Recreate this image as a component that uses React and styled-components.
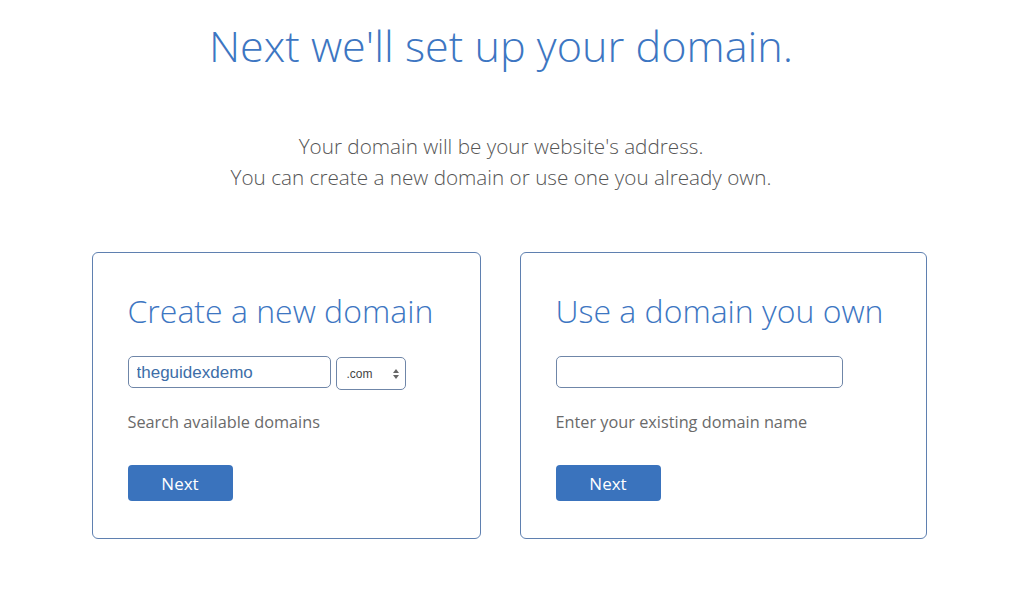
import styled, { createGlobalStyle } from 'styled-components';

const GlobalStyle = createGlobalStyle`
  html, body {
    margin: 0;
    padding: 0;
    background: #fff;
  }
  body {
    font-family: 'Open Sans', 'Liberation Sans', sans-serif;
  }
`;

const Page = styled.div`
  width: 1024px;
  height: 590px;
  overflow: hidden;
  background: #fff;
  display: flex;
  flex-direction: column;
  align-items: center;
`;

const Title = styled.h1`
  margin: 15px 22px 0 0;
  font-size: 43.2px;
  font-weight: 300;
  color: #3d76c2;
  line-height: 62px;
`;

const Intro = styled.p`
  margin: 54px 22px 0 0;
  font-size: 20.7px;
  font-weight: 300;
  color: #555;
  line-height: 31px;
  text-align: center;
`;

const Cards = styled.div`
  display: flex;
  gap: 39px;
  margin-top: 59px;
  margin-right: 6px;
`;

const Card = styled.section`
  box-sizing: border-box;
  width: ${({ $width }) => $width}px;
  height: 287px;
  border: 1.5px solid #5f80b0;
  border-radius: 6px;
  padding: 36px 35px 0;
`;

const CardTitle = styled.h2`
  margin: 0;
  font-size: 32px;
  font-weight: 300;
  color: #3d76c2;
  line-height: 44px;
`;

const Row = styled.div`
  display: flex;
  gap: 5px;
  height: 34px;
  margin-top: 23px;
`;

const TextInput = styled.input`
  box-sizing: border-box;
  width: ${({ $width }) => $width}px;
  height: 32px;
  border: 1px solid #6f86a8;
  border-radius: 5px;
  padding: 2px 8px 0;
  font-family: 'Liberation Sans', Arial, sans-serif;
  font-size: 17px;
  color: #3d6ea8;
  outline: none;
  background: #fff;
`;

const SelectBox = styled.div`
  box-sizing: border-box;
  width: 70px;
  height: 33px;
  margin-top: 1px;
  border: 1px solid #6f86a8;
  border-radius: 5px;
  display: flex;
  align-items: center;
  justify-content: space-between;
  padding: 0 6px 0 10px;
  font-family: 'Liberation Sans', Arial, sans-serif;
  font-size: 12px;
  color: #444;
`;

const Hint = styled.p`
  margin: 20px 0 0;
  font-size: 16.3px;
  color: #6a6a6a;
  line-height: 24px;
`;

const Button = styled.button`
  margin-top: 31px;
  width: 105px;
  height: 36px;
  border: none;
  border-radius: 4px;
  background: #3a73bd;
  color: #fff;
  font-family: 'Open Sans', 'Liberation Sans', sans-serif;
  font-size: 17px;
  cursor: pointer;
`;

function Arrows() {
  return (
    <svg width="6" height="10" viewBox="0 0 6 10">
      <path d="M0 4 L3 0 L6 4 Z" fill="#666" />
      <path d="M0 6 L3 10 L6 6 Z" fill="#666" />
    </svg>
  );
}

export default function App() {
  return (
    <Page>
      <GlobalStyle />
      <Title>Next we'll set up your domain.</Title>
      <Intro>
        Your domain will be your website's address.
        <br />
        You can create a new domain or use one you already own.
      </Intro>
      <Cards>
        <Card $width={389}>
          <CardTitle>Create a new domain</CardTitle>
          <Row>
            <TextInput $width={203} defaultValue="theguidexdemo" />
            <SelectBox>
              .com
              <Arrows />
            </SelectBox>
          </Row>
          <Hint>Search available domains</Hint>
          <Button>Next</Button>
        </Card>
        <Card $width={407}>
          <CardTitle>Use a domain you own</CardTitle>
          <Row>
            <TextInput $width={287} />
          </Row>
          <Hint>Enter your existing domain name</Hint>
          <Button>Next</Button>
        </Card>
      </Cards>
    </Page>
  );
}
